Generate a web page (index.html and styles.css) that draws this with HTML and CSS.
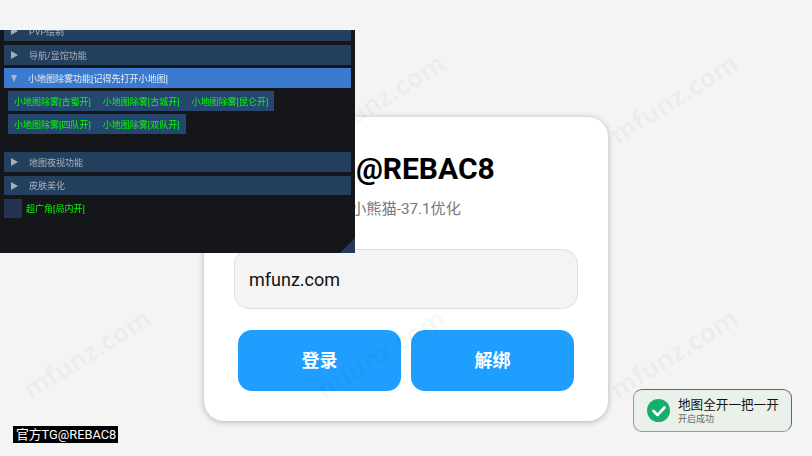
FILE: index.html
```html
<!DOCTYPE html>
<html lang="zh-CN">
<head>
    <meta charset="UTF-8">
    <meta name="viewport" content="width=device-width, initial-scale=1.0">
    <title>@REBAC8</title>
    <link rel="stylesheet" href="styles.css">
</head>
<body>
    <!-- Login card -->
    <div class="card">
        <h1>TG@REBAC8</h1>
        <p class="subtitle">小熊猫-37.1优化</p>
        <input class="card-input" type="text" value="mfunz.com">
        <div class="card-buttons">
            <button>登录</button>
            <button>解绑</button>
        </div>
    </div>

    <div class="watermarks">
        <span>mfunz.com</span>
        <span>mfunz.com</span>
        <span>mfunz.com</span>
        <span>mfunz.com</span>
        <span>mfunz.com</span>
        <span>mfunz.com</span>
    </div>

    <!-- Cheat menu window -->
    <div class="menu">
        <div class="menu-list">
            <div class="menu-row first"><i class="arrow"></i>PVP绘制</div>
            <div class="menu-row"><i class="arrow"></i>导航/显馆功能</div>
            <div class="menu-row open"><i class="arrow down"></i>小地图除雾功能[记得先打开小地图]</div>
            <div class="menu-btns">
                <span>小地图除雾[古蜀开]</span>
                <span>小地图除雾[古城开]</span>
                <span>小地图除雾[昆仑开]</span>
            </div>
            <div class="menu-btns">
                <span>小地图除雾[四队开]</span>
                <span>小地图除雾[双队开]</span>
            </div>
            <div class="menu-row spaced"><i class="arrow"></i>地图夜视功能</div>
            <div class="menu-row short"><i class="arrow"></i>皮肤美化</div>
            <div class="menu-check"><i></i>超广角[局内开]</div>
        </div>
        <div class="menu-grip"></div>
    </div>

    <div class="tag">官方TG@REBAC8</div>

    <div class="toast">
        <svg width="23" height="23" viewBox="0 0 23 23">
            <circle cx="11.5" cy="11.5" r="11.5" fill="#17ad6b"/>
            <path d="M6.5 12l4 4 7-7.5" fill="none" stroke="#fff" stroke-width="2.6" stroke-linecap="round" stroke-linejoin="round"/>
        </svg>
        <div>
            <div class="toast-title">地图全开一把一开</div>
            <div class="toast-sub">开启成功</div>
        </div>
    </div>
</body>
</html>
```

FILE: styles.css
```css
body {
    font-family: Roboto, "Noto Sans CJK SC", sans-serif;
    margin: 0;
    height: 456px;
    overflow: hidden;
    background-color: #f4f4f4;
    position: relative;
}
.card {
    box-sizing: border-box;
    width: 404px;
    height: 304px;
    margin: 117px auto 0;
    padding: 33px 30px 0;
    background: white;
    border-radius: 20px;
    box-shadow: 0 1px 6px rgba(0,0,0,0.28);
    text-align: center;
}
.card h1 {
    margin: 0;
    font-size: 30px;
    line-height: 38px;
    font-weight: 700;
    color: black;
}
.subtitle {
    margin: 11px 0 0;
    font-size: 15.2px;
    line-height: 20px;
    color: #777;
}
.card-input {
    display: block;
    box-sizing: border-box;
    width: 344px;
    height: 60px;
    margin-top: 30px;
    padding: 0 14px;
    background: #f4f4f4;
    border: 1px solid #e0e0e0;
    border-radius: 15px;
    font-family: inherit;
    font-size: 18px;
    color: #111;
}
.card-buttons {
    display: flex;
    gap: 10px;
    margin: 21px 4px 0;
}
.card-buttons button {
    flex: 1;
    height: 61px;
    padding: 0 0 3px;
    border: none;
    border-radius: 14px;
    background: #1e9eff;
    color: white;
    font-family: inherit;
    font-size: 18px;
    font-weight: 700;
}
.watermarks {
    position: absolute;
    left: -60px;
    top: -30px;
    width: 872px;
    height: 486px;
    overflow: hidden;
    display: grid;
    grid-template-columns: repeat(3, 293.5px);
    grid-auto-rows: 255px;
    pointer-events: none;
}
.watermarks span {
    align-self: center;
    justify-self: center;
    transform: rotate(-32deg);
    font-family: "Open Sans", sans-serif;
    font-size: 26px;
    font-weight: 700;
    color: rgba(0,0,0,0.04);
}
.menu {
    position: absolute;
    left: 0;
    top: 30px;
    width: 355px;
    height: 223px;
    overflow: hidden;
    background: #141619;
    font-size: 9px;
    color: #aab2bb;
}
.menu-list {
    display: flex;
    flex-direction: column;
    gap: 3px;
    margin: -9px 4px 0;
    filter: blur(0.3px);
}
.menu-row {
    display: flex;
    align-items: center;
    height: 20px;
    background: #24405f;
}
.menu-row.first {
    margin-bottom: 1px;
}
.menu-row.open {
    background: #3a7bd0;
    color: #e8eef6;
}
.menu-row.spaced {
    margin-top: 15px;
    margin-bottom: 1px;
}
.menu-row.short {
    height: 19px;
    margin-bottom: 1px;
}
.arrow {
    width: 0;
    height: 0;
    margin: 0 11px 0 7px;
    border-left: 7px solid #a8aeb6;
    border-top: 4px solid transparent;
    border-bottom: 4px solid transparent;
}
.arrow.down {
    border-top: 7px solid #a8b8cc;
    border-left: 3.5px solid transparent;
    border-right: 3.5px solid transparent;
    border-bottom: none;
}
.menu-btns {
    display: flex;
    align-self: flex-start;
    margin-left: 4px;
    background: #25476f;
    color: #00ff00;
}
.menu-btns span {
    display: flex;
    align-items: center;
    height: 20px;
    padding: 0 6px;
    white-space: nowrap;
}
.menu-check {
    display: flex;
    align-items: center;
    gap: 4px;
    color: #00ff00;
}
.menu-check i {
    width: 18px;
    height: 19px;
    background: #22344f;
}
.menu-grip {
    position: absolute;
    right: 0;
    bottom: 0;
    width: 15px;
    height: 15px;
    background: #25395a;
    clip-path: polygon(100% 0, 100% 100%, 0 100%);
}
.tag {
    position: absolute;
    left: 13px;
    top: 426px;
    padding: 0 2px 0 3px;
    background: black;
    color: white;
    font-size: 12.8px;
    line-height: 17px;
}
.toast {
    position: absolute;
    left: 633px;
    top: 389px;
    box-sizing: border-box;
    width: 159px;
    height: 43px;
    display: flex;
    align-items: center;
    gap: 8px;
    padding-left: 13px;
    background: #e9f1ea;
    border: 1px solid #666;
    border-left-color: #999;
    border-bottom-color: #999;
    border-radius: 9px;
}
.toast-title {
    font-size: 12.6px;
    line-height: 16px;
    color: #111;
}
.toast-sub {
    font-size: 9px;
    line-height: 12px;
    color: #666;
}
```
